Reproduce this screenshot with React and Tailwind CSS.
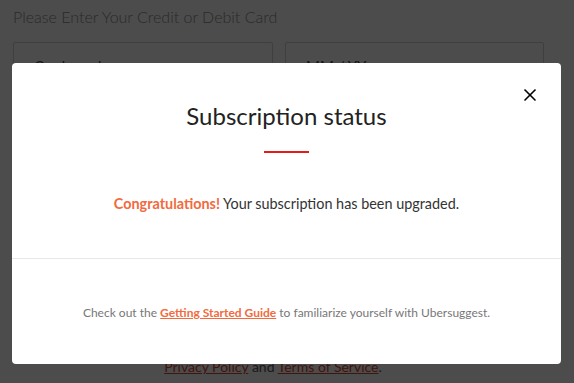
import { X } from "lucide-react"

export default function App() {
    return (
        <div className="relative w-[574px] h-[383px] overflow-hidden bg-white font-['Lato',sans-serif]">
            {/* page behind the modal */}
            <div className="px-[13px] pt-[5px]">
                <h2 className="text-[16px] font-light text-[#8c8c8c] leading-[24px]">Please Enter Your Credit or Debit Card</h2>
                <div className="mt-[13px] flex gap-[12px]">
                    <div className="w-[260px] h-[52px] border border-[#d2d2d2] rounded-[2px] px-5 pt-3 text-[15px] text-[#444]">Card number</div>
                    <div className="w-[259px] h-[52px] border border-[#d2d2d2] rounded-[2px] px-5 pt-3 text-[15px] text-[#444]">MM / YY</div>
                </div>
                <p className="mt-[262px] text-center text-[14px] text-[#555] pr-[28px]">
                    <a className="underline text-[#d9452d]">Privacy Policy</a> and <a className="underline text-[#d9452d]">Terms of Service</a>.
                </p>
            </div>

            {/* overlay */}
            <div className="absolute inset-0 bg-black/70" />

            {/* modal */}
            <div className="absolute left-[12px] top-[63px] w-[549px] h-[301px] bg-white rounded-[4px] flex flex-col">
                <button className="absolute right-[21px] top-[22px] text-black">
                    <X size={20} strokeWidth={2} />
                </button>
                <div className="flex flex-col items-center pt-[38px] h-[195px]">
                    <h1 className="text-[24px] leading-[30px] text-[#222]">Subscription status</h1>
                    <div className="mt-[20px] w-[45px] h-[1.5px] bg-[#e31b1b]" />
                    <p className="mt-[40px] text-[14.4px] text-[#333]">
                        <span className="font-bold text-[#f26a3d]">Congratulations!</span> Your subscription has been upgraded.
                    </p>
                </div>
                <div className="h-px bg-[#e8e8e8]" />
                <div className="flex justify-center pt-[45px]">
                    <p className="text-[12px] text-[#777]">
                        Check out the <a className="underline font-bold text-[#f26a3d]">Getting Started Guide</a> to familiarize yourself with Ubersuggest.
                    </p>
                </div>
            </div>
        </div>
    )
}
